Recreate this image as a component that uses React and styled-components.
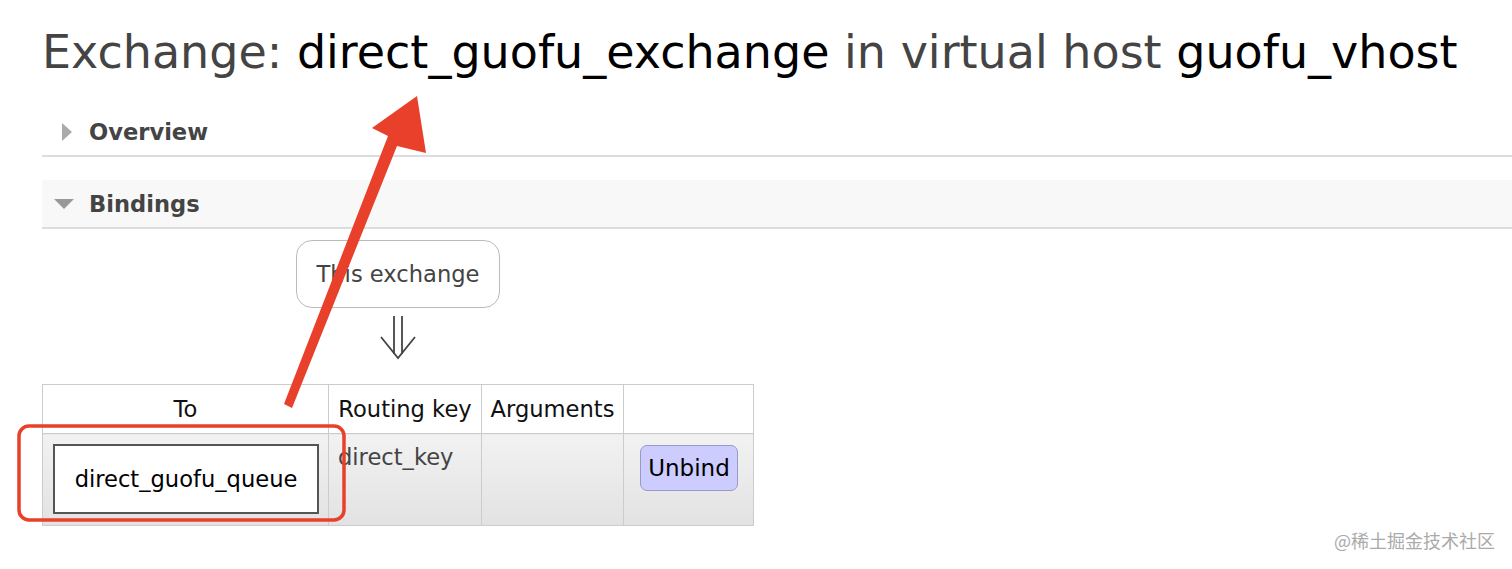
import React from 'react';
import styled, { createGlobalStyle } from 'styled-components';

const GlobalStyle = createGlobalStyle`
    html, body {
        margin: 0;
        padding: 0;
        background: #fff;
    }
    body {
        font-family: "DejaVu Sans", Verdana, sans-serif;
        color: #484848;
    }
`;

const Page = styled.div`
    position: relative;
    width: 1512px;
    height: 569px;
    overflow: hidden;
    padding-left: 42px;
    box-sizing: border-box;
`;

const Title = styled.h1`
    margin: 0;
    padding-top: 25px;
    height: 108px;
    box-sizing: border-box;
    font-size: 46px;
    line-height: normal;
    font-weight: normal;
    color: #444;
    white-space: nowrap;

    b {
        font-weight: normal;
        color: #000;
    }
`;

const Section = styled.div`
    display: flex;
    align-items: center;
    height: ${(p) => p.$height}px;
    margin-top: ${(p) => p.$top}px;
    background: ${(p) => (p.$shaded ? '#f8f8f8' : 'transparent')};
    border-bottom: 2px solid #ddd;
    padding-left: ${(p) => p.$indent}px;
    font-size: 22.6px;
    font-weight: bold;
    color: #444;
`;

const Caret = styled.span`
    display: inline-block;
    width: 0;
    height: 0;
    margin-right: ${(p) => p.$gap}px;
    border-style: solid;
    border-color: transparent;
    ${(p) =>
        p.$open
            ? 'border-width: 10px 10px 0 10px; border-top-color: #999;'
            : 'border-width: 9px 0 9px 10px; border-left-color: #aaa;'}
`;

const Body = styled.div`
    display: flex;
    flex-direction: column;
    align-items: flex-start;
`;

const ExchangeBox = styled.div`
    margin: 11px 0 0 254px;
    width: 204px;
    height: 68px;
    box-sizing: border-box;
    border: 1.5px solid #bbb;
    border-radius: 16px;
    display: flex;
    align-items: center;
    justify-content: center;
    font-size: 22.6px;
    color: #444;
`;

const DownArrow = styled.svg`
    display: block;
    margin: 8px 0 0 336px;
`;

const Table = styled.table`
    margin-top: 22px;
    border-collapse: collapse;
    table-layout: fixed;
    width: 711px;
    font-size: 22.6px;

    th, td {
        border: 1.5px solid #ccc;
        box-sizing: border-box;
    }
    th {
        height: 49px;
        font-weight: normal;
        color: #111;
        padding: 0;
        white-space: nowrap;
    }
    td {
        height: 92px;
        vertical-align: top;
        background: linear-gradient(#f2f2f2, #e2e2e2);
        color: #444;
    }
`;

const QueueCell = styled.td`
    padding: 10px 9px 0 10px;
`;

const QueueBox = styled.div`
    height: 70px;
    box-sizing: border-box;
    border: 2px solid #555;
    background: #fff;
    display: flex;
    align-items: center;
    justify-content: center;
    color: #000;
    font-size: 22.6px;
`;

const TextCell = styled.td`
    padding: 10px 0 0 9px;
`;

const ButtonCell = styled.td`
    padding: 11px 0 0 16px;
`;

const Unbind = styled.button`
    display: block;
    width: 98px;
    height: 46px;
    background: #ccf;
    border: 1.5px solid #99c;
    border-radius: 7px;
    font-family: inherit;
    font-size: 23px;
    color: #000;
    padding: 0;
`;

const Overlay = styled.svg`
    position: absolute;
    left: 0;
    top: 0;
    pointer-events: none;
`;

const Watermark = styled.div`
    position: absolute;
    right: 17px;
    bottom: 16px;
    font-family: "Noto Sans CJK SC", sans-serif;
    font-size: 18px;
    color: #aaa;
`;

export default function App() {
    return (
        <>
            <GlobalStyle />
            <Page>
                <Title>
                    Exchange: <b>direct_guofu_exchange</b> in virtual host <b>guofu_vhost</b>
                </Title>
                <Section $height={47} $top={0} $indent={20}>
                    <Caret $gap={17} />
                    Overview
                </Section>
                <Section $height={47} $top={23} $indent={12} $shaded>
                    <Caret $open $gap={15} />
                    Bindings
                </Section>
                <Body>
                    <ExchangeBox>This exchange</ExchangeBox>
                    <DownArrow width="40" height="46" viewBox="0 0 40 46">
                        <g fill="none" stroke="#444" strokeWidth="1.8">
                            <line x1="16" y1="0" x2="16" y2="38" />
                            <line x1="24" y1="0" x2="24" y2="38" />
                            <polyline points="3,21 20,42 37,21" />
                        </g>
                    </DownArrow>
                    <Table>
                        <colgroup>
                            <col style={{ width: 286 }} />
                            <col style={{ width: 153 }} />
                            <col style={{ width: 142 }} />
                            <col style={{ width: 130 }} />
                        </colgroup>
                        <thead>
                            <tr>
                                <th>To</th>
                                <th>Routing key</th>
                                <th>Arguments</th>
                                <th></th>
                            </tr>
                        </thead>
                        <tbody>
                            <tr>
                                <QueueCell>
                                    <QueueBox>direct_guofu_queue</QueueBox>
                                </QueueCell>
                                <TextCell>direct_key</TextCell>
                                <TextCell></TextCell>
                                <ButtonCell>
                                    <Unbind>Unbind</Unbind>
                                </ButtonCell>
                            </tr>
                        </tbody>
                    </Table>
                </Body>
                <Overlay width="1512" height="569" viewBox="0 0 1512 569">
                    <polygon
                        points="284,404 292,408 397,146 426,153 417,96 372,128 388,136"
                        fill="#e8402a"
                    />
                    <rect
                        x="19"
                        y="426"
                        width="325"
                        height="94"
                        rx="10"
                        fill="none"
                        stroke="#e8402a"
                        strokeWidth="3.5"
                    />
                </Overlay>
                <Watermark>@稀土掘金技术社区</Watermark>
            </Page>
        </>
    );
}
